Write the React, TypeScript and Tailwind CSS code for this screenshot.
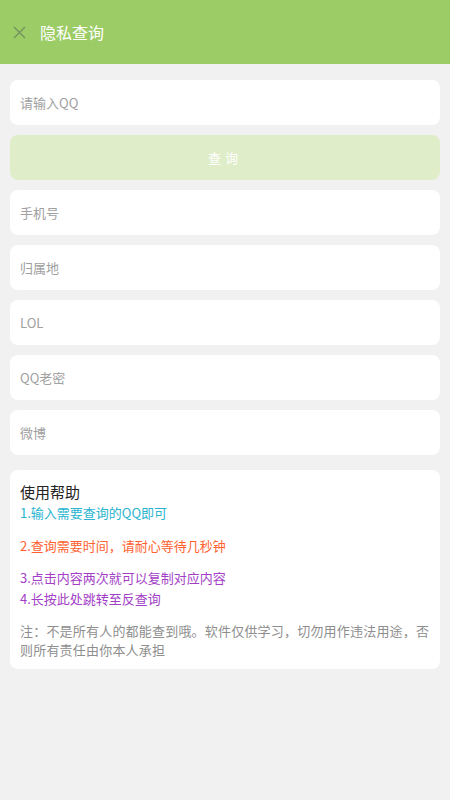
const fields = ["手机号", "归属地", "LOL", "QQ老密", "微博"];

export default function App() {
  return (
    <div
      className="min-h-[800px] w-[450px] bg-[#f1f1f1]"
      style={{ fontFamily: '"Noto Sans CJK SC", Roboto, sans-serif' }}
    >
      {/* Toolbar */}
      <div className="flex h-16 items-center bg-[#9ccc65] pl-[13px]">
        <svg width="13" height="13" viewBox="0 0 13 13" className="text-[#75925f]">
          <path d="M1 1L12 12M12 1L1 12" stroke="currentColor" strokeWidth="1.4" fill="none" />
        </svg>
        <span className="ml-[14px] text-[16px] text-white">隐私查询</span>
      </div>

      <div className="flex flex-col gap-[10px] px-[10px] pt-4">
        <input
          className="h-[45px] w-full rounded-lg bg-white px-[10px] text-[13px] text-[#333] outline-none placeholder:text-[#a0a0a0]"
          placeholder="请输入QQ"
        />
        <button className="h-[45px] w-full rounded-lg bg-[#dfedc9] text-[13px] tracking-[4px] text-white">
          查询
        </button>
        {fields.map((f) => (
          <div
            key={f}
            className="flex h-[45px] items-center rounded-lg bg-white px-[10px] text-[13px] text-[#a0a0a0]"
          >
            {f}
          </div>
        ))}

        {/* Help */}
        <div className="mt-[5px] rounded-lg bg-white pl-[10px] pr-[4px] pt-[11px] pb-[10px]">
          <div className="text-[15px] leading-[22px] text-[#222]">使用帮助</div>
          <div className="text-[13px] leading-5 text-[#2ab4cf]">
            1.输入需要查询的QQ即可
          </div>
          <div className="mt-[13px] text-[13px] leading-5 text-[#ff6232]">
            2.查询需要时间，请耐心等待几秒钟
          </div>
          <div className="mt-[12px] text-[13px] leading-5 text-[#a23fc6]">
            3.点击内容两次就可以复制对应内容
          </div>
          <div className="text-[13px] leading-[21px] text-[#a23fc6]">
            4.长按此处跳转至反查询
          </div>
          <div className="mt-[12px] text-[13px] leading-[19px] tracking-[0.2px] text-[#8e8e8e]">
            注：不是所有人的都能查到哦。软件仅供学习，切勿用作违法用途，否则所有责任由你本人承担
          </div>
        </div>
      </div>
    </div>
  );
}
